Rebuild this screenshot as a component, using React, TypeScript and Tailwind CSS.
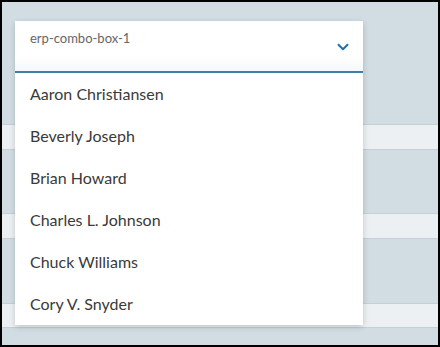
import { ChevronDown } from 'lucide-react';

const names = [
  'Aaron Christiansen',
  'Beverly Joseph',
  'Brian Howard',
  'Charles L. Johnson',
  'Chuck Williams',
  'Cory V. Snyder',
];

// background rows of the page behind the open combo box
const rows = [
  { h: 122, light: false },
  { h: 26, light: true },
  { h: 63, light: false },
  { h: 26, light: true },
  { h: 64, light: false },
  { h: 25, light: true },
  { h: 17, light: false },
];

export default function App() {
  return (
    <div
      className="w-[440px] h-[347px] border-2 border-black bg-[#d1dde2] relative overflow-hidden"
      style={{ fontFamily: 'Lato, "Open Sans", sans-serif' }}
    >
      <div className="flex flex-col">
        {rows.map((r, i) => (
          <div
            key={i}
            className={
              r.light
                ? 'bg-[#ecf0f3] border-y border-[#c3d0d6] box-border'
                : 'bg-[#d1dde2]'
            }
            style={{ height: r.h }}
          />
        ))}
      </div>

      {/* open combo box */}
      <div className="absolute left-[13px] top-[19px] w-[348px] shadow-[0_2px_6px_rgba(0,0,0,0.18)]">
        <div className="h-[52px] bg-gradient-to-b from-white from-70% to-[#f6f7f8] border-b-2 border-[#3f7ea5] flex justify-between pl-[15px] pr-[11px]">
          <span className="text-[13px] text-[#666] pt-[9px] leading-[16px]">erp-combo-box-1</span>
          <ChevronDown className="mt-[17px] w-[18px] h-[18px] text-[#1f6fb2]" strokeWidth={2.6} />
        </div>
        <ul className="bg-white">
          {names.map((n) => (
            <li key={n} className="h-[42px] flex items-center pl-[15px] text-[16px] text-[#3a3a3a]">
              {n}
            </li>
          ))}
        </ul>
      </div>
    </div>
  );
}
